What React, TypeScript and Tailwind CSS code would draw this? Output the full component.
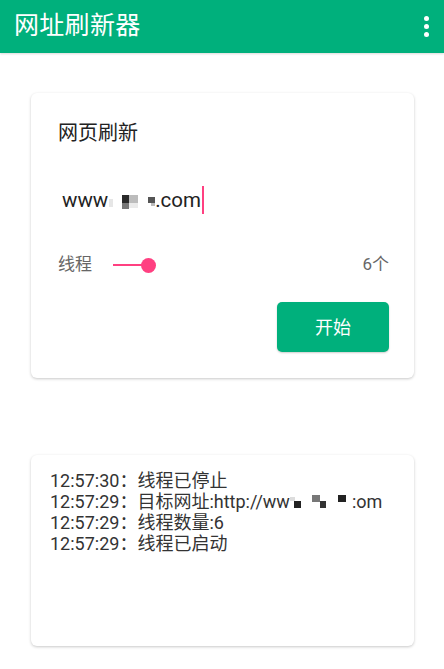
import React from "react";

const font = { fontFamily: "Roboto, 'Noto Sans CJK SC', sans-serif" };

function Mosaic1() {
  return (
    <span className="relative inline-block w-[47px] h-[20px] align-middle">
      <span className="absolute left-[1px] top-[9px] w-[4px] h-[8px] bg-[#e6e6e6]" />
      <span className="absolute left-[14px] top-[5px] w-[7px] h-[8px] bg-[#2a2a2a]" />
      <span className="absolute left-[14px] top-[13px] w-[7px] h-[6px] bg-[#777]" />
      <span className="absolute left-[21px] top-[5px] w-[9px] h-[8px] bg-[#bcbcbc]" />
      <span className="absolute left-[21px] top-[13px] w-[9px] h-[5px] bg-[#eaeaea]" />
      <span className="absolute left-[40px] top-[7px] w-[7px] h-[6px] bg-[#555]" />
      <span className="absolute left-[43px] top-[13px] w-[4px] h-[3px] bg-[#bbb]" />
    </span>
  );
}

function Mosaic2() {
  return (
    <span className="relative inline-block w-[62px] h-[18px] align-middle">
      <span className="absolute left-[4px] top-[8px] w-[7px] h-[7px] bg-[#222]" />
      <span className="absolute left-[0px] top-[4px] w-[5px] h-[4px] bg-[#ddd]" />
      <span className="absolute left-[22px] top-[2px] w-[8px] h-[7px] bg-[#777]" />
      <span className="absolute left-[30px] top-[8px] w-[6px] h-[7px] bg-[#333]" />
      <span className="absolute left-[48px] top-[2px] w-[8px] h-[7px] bg-[#222]" />
    </span>
  );
}

export default function App() {
  return (
    <div className="w-[444px] h-[669px] bg-white" style={font}>
      <div className="h-[53px] bg-[#00b07c] flex items-center justify-between pl-[14px] pr-[14px] shadow-[0_1px_2px_rgba(0,0,0,0.15)]">
        <div className="text-white text-[25px] leading-none tracking-[0.3px] mt-[-2px]">网址刷新器</div>
        <div className="flex flex-col gap-[3px] items-center mr-[1px]">
          <span className="w-[5px] h-[5px] rounded-full bg-white" />
          <span className="w-[5px] h-[5px] rounded-full bg-white" />
          <span className="w-[5px] h-[5px] rounded-full bg-white" />
        </div>
      </div>

      <div className="mx-[31px] mt-[40px] mr-[30px] h-[285px] rounded-[6px] bg-white shadow-[0_1px_3px_rgba(0,0,0,0.22)] pl-[27px] pr-[25px] pt-[26px] flex flex-col">
        <div className="text-[20px] leading-[28px] text-[#222] h-[28px]">网页刷新</div>
        <div className="mt-[38px] ml-[4px] flex items-center h-[30px]">
          <span className="text-[20.5px] text-[#222] leading-none">www</span>
          <Mosaic1 />
          <span className="text-[20.5px] text-[#222] leading-none">.com</span>
          <span className="w-[2px] h-[28px] bg-[#ff4081] ml-[1px]" />
        </div>
        <div className="mt-[38px] flex items-center h-[24px]">
          <span className="text-[17px] text-[#666]">线程</span>
          <div className="ml-[21px] relative w-[42px] h-[16px] flex items-center">
            <span className="absolute left-0 w-[36px] h-[2px] bg-[#ff4081]" />
            <span className="absolute left-[28px] w-[15px] h-[15px] rounded-full bg-[#ff4081]" />
          </div>
          <span className="ml-auto text-[17px] text-[#666]">6个</span>
        </div>
        <div className="mt-[25px] flex justify-end">
          <button className="w-[112px] h-[50px] rounded-[5px] bg-[#00b07c] text-white text-[18px] shadow-[0_1px_2px_rgba(0,0,0,0.2)]">
            开始
          </button>
        </div>
      </div>

      <div className="mx-[31px] mr-[30px] mt-[77px] h-[191px] rounded-[6px] bg-white shadow-[0_1px_3px_rgba(0,0,0,0.22)] pl-[19px] pt-[15px] text-[18px] leading-[21px] text-[#333]">
        <div>12:57:30：线程已停止</div>
        <div className="flex items-center">
          <span>12:57:29：目标网址:http://ww</span>
          <Mosaic2 />
          <span>:om</span>
        </div>
        <div>12:57:29：线程数量:6</div>
        <div>12:57:29：线程已启动</div>
      </div>
    </div>
  );
}
